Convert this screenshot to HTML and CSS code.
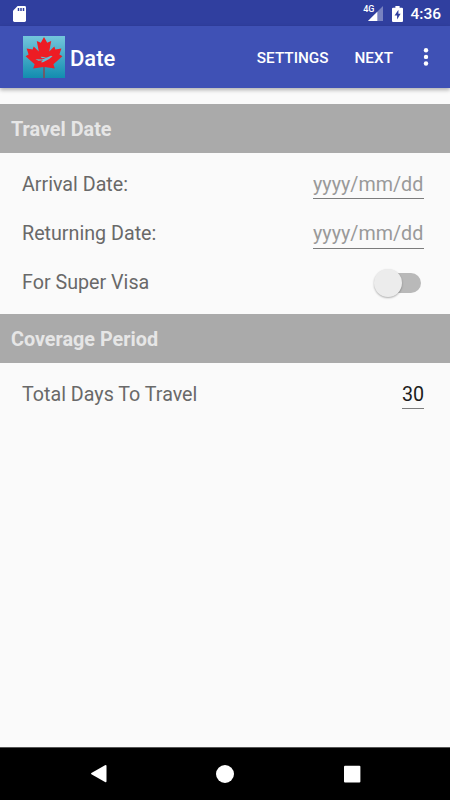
FILE: index.html
```
<!DOCTYPE html>
<html lang="en">
<head>
  <meta charset="UTF-8" />
  <meta name="viewport" content="width=device-width, initial-scale=1.0" />
  <title>Date</title>
  <link rel="stylesheet" href="styles.css">
</head>
<body>
  <div class="screen">
    <div class="status-bar">
      <svg class="sd-card" width="13" height="16" viewBox="0 0 13 16">
        <path fill="#fff" d="M4.6 0H11.6Q13 0 13 1.4V14.6Q13 16 11.6 16H1.4Q0 16 0 14.6V4.8Z"/>
        <path stroke="#303f9f" stroke-width="1.5" d="M5.5 2v3M8 2v3M10.5 2v3"/>
      </svg>
      <div class="status-icons">
        <span class="network">4G</span>
        <svg class="signal" width="15" height="15" viewBox="0 0 15 15">
          <path fill="#fff" fill-opacity=".35" d="M15 0V15H0Z"/>
          <path fill="#fff" d="M9.3 5.7V15H0Z"/>
        </svg>
        <svg class="battery" width="11" height="16" viewBox="0 0 11 16">
          <path fill="#fff" d="M3.4 0h4.2v1.7h2.3q1.1 0 1.1 1.1v12.1q0 1.1-1.1 1.1H1.1Q0 16 0 14.9V2.8q0-1.1 1.1-1.1h2.3z"/>
          <path fill="#303f9f" d="M6.4 3.8 2.6 9.6h2.5v4L8.6 7.8H6.4z"/>
        </svg>
        <span class="clock">4:36</span>
      </div>
    </div>

    <div class="app-bar">
      <svg class="logo" width="42" height="42" viewBox="0 0 42 42">
        <defs>
          <linearGradient id="sky" x1="0" y1="0" x2="0" y2="1">
            <stop offset="0" stop-color="#74c6dc"/>
            <stop offset="1" stop-color="#128daf"/>
          </linearGradient>
        </defs>
        <rect width="42" height="42" fill="url(#sky)"/>
        <path stroke="#9c3d42" stroke-width="1.3" d="M21 31v11"/>
        <path fill="#ed1c24" d="M21 1 24.2 6.8 28.2 5 26.2 15.6 31.3 10.4 32.4 13.6 38.4 12.4 36.4 18.6 39.4 20.2 30.4 28.2 31.8 32.6 21.6 31H20.4L10.2 32.6 11.6 28.2 2.6 20.2 5.6 18.6 3.6 12.4 9.6 13.6 10.7 10.4 15.8 15.6 13.8 5 17.8 6.8Z"/>
        <path fill="#64bdd5" d="M12.5 23.2 19 23.5 24.5 21.3 28 19.8 29.5 20.3 26.2 22.9 20 26.2 17.8 26.3 20 24.2 15.5 24.7ZM19 22.2 17.5 20.8 24 21.2Z"/>
      </svg>
      <h1>Date</h1>
      <button class="action settings">SETTINGS</button>
      <button class="action">NEXT</button>
      <button class="more" aria-label="More options">
        <svg width="6" height="18" viewBox="0 0 6 18" fill="#fff">
          <circle cx="3" cy="2.3" r="2.2"/><circle cx="3" cy="8.9" r="2.2"/><circle cx="3" cy="15.5" r="2.2"/>
        </svg>
      </button>
    </div>

    <div class="content">
      <h2>Travel Date</h2>
      <div class="rows">
        <div class="row">
          <label for="arrival">Arrival Date:</label>
          <input type="text" id="arrival" class="date" placeholder="yyyy/mm/dd">
        </div>
        <div class="row">
          <label for="returning">Returning Date:</label>
          <input type="text" id="returning" class="date" placeholder="yyyy/mm/dd">
        </div>
        <div class="row">
          <span>For Super Visa</span>
          <div class="switch" role="switch" aria-checked="false"><div class="thumb"></div></div>
        </div>
      </div>
      <h2>Coverage Period</h2>
      <div class="rows">
        <div class="row">
          <label for="days">Total Days To Travel</label>
          <input type="text" id="days" class="days" value="30">
        </div>
      </div>
    </div>

    <div class="nav-bar">
      <svg width="18" height="20" viewBox="0 0 18 20"><path fill="#fff" d="M2.4 9.1 16 1.2Q17.5.5 17.5 2V17.2Q17.5 18.7 16 18L2.4 10.3Q1.6 9.7 2.4 9.1Z"/></svg>
      <svg width="18" height="18" viewBox="0 0 18 18"><circle cx="9" cy="9" r="9" fill="#fff"/></svg>
      <svg width="18" height="18" viewBox="0 0 18 18"><rect x="1" y=".8" width="16.4" height="16.6" rx="1" fill="#fff"/></svg>
    </div>
  </div>
</body>
</html>
```

FILE: styles.css
```
* { box-sizing: border-box; }
body { font-family: Roboto, sans-serif; margin: 0; background: #fafafa; color: #696969; }
.screen { display: flex; flex-direction: column; height: 800px; width: 450px; overflow: hidden; }
.status-bar {
  display: flex; align-items: center; justify-content: space-between;
  height: 26px; padding: 1px 9px 0 13px;
  background: #303f9f; color: white;
}
.status-icons { display: flex; align-items: center; }
.network { font-size: 9px; font-weight: 500; line-height: 10px; align-self: flex-start; margin-right: -6px; }
.battery { margin: 0 7px 0 9px; }
.clock { font-size: 15.5px; font-weight: 500; line-height: 18px; padding-top: 1px; }
.app-bar {
  display: flex; align-items: center;
  height: 62px; padding: 0 12px 0 23px; flex-shrink: 0;
  background: #3f51b5; color: white;
  box-shadow: 0 2px 4px rgba(0,0,0,0.3);
}
h1 { flex: 1; margin: 2px 0 0 5px; font-size: 22px; font-weight: 500; }
button {
  background: none; border: none; padding: 0;
  color: white; font-family: inherit;
}
.action { font-size: 15.3px; font-weight: 500; margin: 2px 26px 0 0; }
.more { display: flex; justify-content: center; width: 24px; margin-left: -5px; }
.content { flex: 1; padding-top: 16px; }
h2 {
  height: 49px; margin: 0; padding-left: 11px;
  background: #aaa; color: #e6e6e6;
  font-size: 19.8px; font-weight: 700; line-height: 51px;
}
.rows { padding: 6.7px 26px 6.4px 22px; }
.row {
  display: flex; align-items: center; justify-content: space-between;
  height: 49.3px; font-size: 19.7px;
}
input {
  height: 30px; padding: 1px 0 0; margin: 0;
  background: none; border: none; border-bottom: 1px solid #7c7c7c; border-radius: 0;
  font: inherit; color: #1c1c1c; outline: none;
}
input::placeholder { color: #999; opacity: 1; }
.date { width: 111px; }
.days { width: 22px; }
.switch {
  display: flex; align-items: center;
  width: 46px; height: 20px; margin-right: 3px;
  border-radius: 10px;
  background: linear-gradient(to right, transparent 14px, #b9b9b9 14px);
}
.thumb {
  width: 28px; height: 28px; border-radius: 50%;
  margin-left: -1px;
  background: #ececec; box-shadow: 0 1px 2px rgba(0,0,0,0.3);
}
.nav-bar {
  display: flex; align-items: center; justify-content: space-between;
  height: 53px; padding: 0 89px;
  background: black;
  border-top: 1px solid #555;
}
```
